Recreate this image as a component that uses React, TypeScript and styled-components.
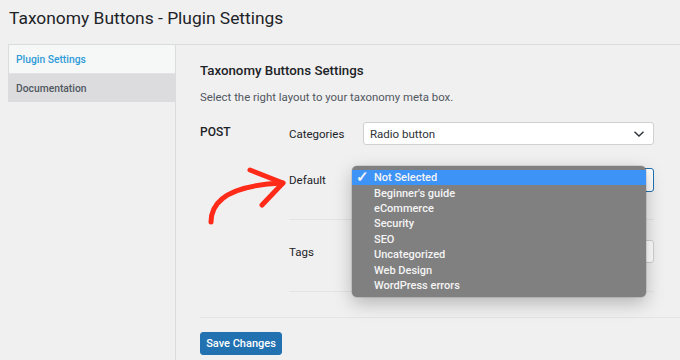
import styled, { createGlobalStyle } from "styled-components";

const GlobalStyle = createGlobalStyle`
  html, body {
    margin: 0;
    padding: 0;
    background: #f0f0f1;
    font-family: Roboto, "Liberation Sans", sans-serif;
    color: #1d2327;
  }
`;

const options = [
  "Not Selected",
  "Beginner's guide",
  "eCommerce",
  "Security",
  "SEO",
  "Uncategorized",
  "Web Design",
  "WordPress errors",
];

const Chevron = () => (
  <svg width="12" height="8" viewBox="0 0 12 8">
    <path d="M1.5 1.8 L6 6 L10.5 1.8" fill="none" stroke="#2c3338" strokeWidth="1.4" />
  </svg>
);

const Arrow = () => (
  <ArrowSvg width="90" height="64" viewBox="0 0 90 64">
    <path
      d="M11 59 C 11 36, 34 22, 83 20"
      fill="none"
      stroke="#ff2a17"
      strokeWidth="5"
      strokeLinecap="round"
    />
    <path
      d="M50 7 L83 20 L62 42"
      fill="none"
      stroke="#ff2a17"
      strokeWidth="5"
      strokeLinecap="round"
      strokeLinejoin="round"
    />
  </ArrowSvg>
);

const App = () => {
  return (
    <Page>
      <GlobalStyle />
      <Title>Taxonomy Buttons - Plugin Settings</Title>
      <Panel>
        <Sidebar>
          <TabList>
            <Tab active>Plugin Settings</Tab>
            <Tab>Documentation</Tab>
          </TabList>
        </Sidebar>
        <Content>
          <Heading>Taxonomy Buttons Settings</Heading>
          <Description>Select the right layout to your taxonomy meta box.</Description>
          <Section>
            <PostType>POST</PostType>
            <Groups>
              <Group>
                <Row>
                  <Label>Categories</Label>
                  <Select>
                    <span>Radio button</span>
                    <Chevron />
                  </Select>
                </Row>
                <Row>
                  <Arrow />
                  <Label>Default</Label>
                  <Select focused>
                    <span />
                    <Chevron />
                    <Menu>
                      {options.map((o, i) => (
                        <MenuItem key={o} selected={i === 0}>
                          <Check>{i === 0 ? "✓" : ""}</Check>
                          {o}
                        </MenuItem>
                      ))}
                    </Menu>
                  </Select>
                </Row>
              </Group>
              <Group second>
                <Row>
                  <Label>Tags</Label>
                  <Select>
                    <span />
                    <Chevron />
                  </Select>
                </Row>
              </Group>
            </Groups>
          </Section>
          <Footer>
            <Button>Save Changes</Button>
          </Footer>
        </Content>
      </Panel>
    </Page>
  );
};

export default App;

const Page = styled.div`
  width: 680px;
  height: 360px;
  overflow: hidden;
  padding-left: 8px;
  box-sizing: border-box;
`;

const Title = styled.h1`
  margin: 0;
  padding: 5px 0 0 1px;
  height: 40px;
  box-sizing: border-box;
  font-size: 17.4px;
  font-weight: 400;
  line-height: 26px;
  color: #1d2327;
`;

const Panel = styled.div`
  display: flex;
  border-top: 1px solid #dcdcde;
  margin-top: 4px;
  height: 320px;
`;

const Sidebar = styled.div`
  width: 167px;
  flex-shrink: 0;
  border-right: 1px solid #dcdcde;
`;

const TabList = styled.div`
  border-left: 1px solid #dcdcde;
  display: flex;
  flex-direction: column;
`;

const Tab = styled.div<{ active?: boolean }>`
  height: 28px;
  padding-left: 7px;
  display: flex;
  align-items: center;
  font-size: 10.3px;
  font-weight: 500;
  background: ${(p) => (p.active ? "#f6f7f7" : "#dcdcde")};
  color: ${(p) => (p.active ? "#2f9bd8" : "#50575e")};
  border-bottom: ${(p) => (p.active ? "1px solid #e2e2e4" : "none")};
`;

const Content = styled.div`
  flex: 1;
  padding: 17px 0 0 24px;
`;

const Heading = styled.h2`
  margin: 0;
  font-size: 13.3px;
  font-weight: 500;
  line-height: 18px;
`;

const Description = styled.p`
  margin: 9px 0 0;
  font-size: 11.4px;
  line-height: 16px;
  color: #50575e;
`;

const Section = styled.div`
  display: flex;
  margin-top: 17px;
`;

const PostType = styled.div`
  width: 89px;
  flex-shrink: 0;
  padding-top: 1px;
  font-size: 12px;
  font-weight: 500;
  line-height: 18px;
`;

const Groups = styled.div`
  width: 365px;
  display: flex;
  flex-direction: column;
`;

const Group = styled.div<{ second?: boolean }>`
  display: flex;
  flex-direction: column;
  gap: 23px;
  padding: ${(p) => (p.second ? "20px 0 28px" : "0 0 27px")};
  border-bottom: 1px solid #e4e4e6;
`;

const Row = styled.div`
  display: flex;
  align-items: center;
  position: relative;
`;

const ArrowSvg = styled.svg`
  position: absolute;
  left: -89px;
  top: -5px;
`;

const Label = styled.div`
  width: 74px;
  flex-shrink: 0;
  font-size: 11.5px;
  font-weight: 400;
  color: #1d2327;
`;

const Select = styled.div<{ focused?: boolean }>`
  position: relative;
  width: 291px;
  height: ${(p) => (p.focused ? "24px" : "23px")};
  box-sizing: border-box;
  display: flex;
  align-items: center;
  justify-content: space-between;
  padding: 0 8px 0 6px;
  background: #fff;
  border: 1px solid ${(p) => (p.focused ? "#2271b1" : "#d0d0d3")};
  border-radius: 3px;
  font-size: 11.5px;
  color: #2c3338;
`;

const Menu = styled.div`
  position: absolute;
  left: -12px;
  top: -3px;
  width: 294px;
  height: 131px;
  box-sizing: border-box;
  padding-top: 4px;
  background: #808080;
  border-radius: 5px;
  box-shadow: 0 6px 18px rgba(0, 0, 0, 0.25), 0 0 0 0.5px rgba(0, 0, 0, 0.2);
  z-index: 2;
`;

const MenuItem = styled.div<{ selected?: boolean }>`
  height: 15.4px;
  display: flex;
  align-items: center;
  font-size: 11px;
  font-weight: 500;
  color: #f4f4f4;
  background: ${(p) => (p.selected ? "#3d93f6" : "transparent")};
`;

const Check = styled.span`
  width: 22px;
  padding-left: 4px;
  box-sizing: border-box;
  font-size: 15px;
  font-weight: 700;
  line-height: 15px;
`;

const Footer = styled.div`
  margin-top: 25px;
  border-top: 1px solid #e4e4e6;
  padding-top: 14px;
`;

const Button = styled.button`
  width: 82px;
  height: 23px;
  padding: 0;
  background: #2271b1;
  border: 1px solid #2271b1;
  border-radius: 3px;
  color: #fff;
  font-family: inherit;
  font-size: 11px;
  font-weight: 500;
`;
